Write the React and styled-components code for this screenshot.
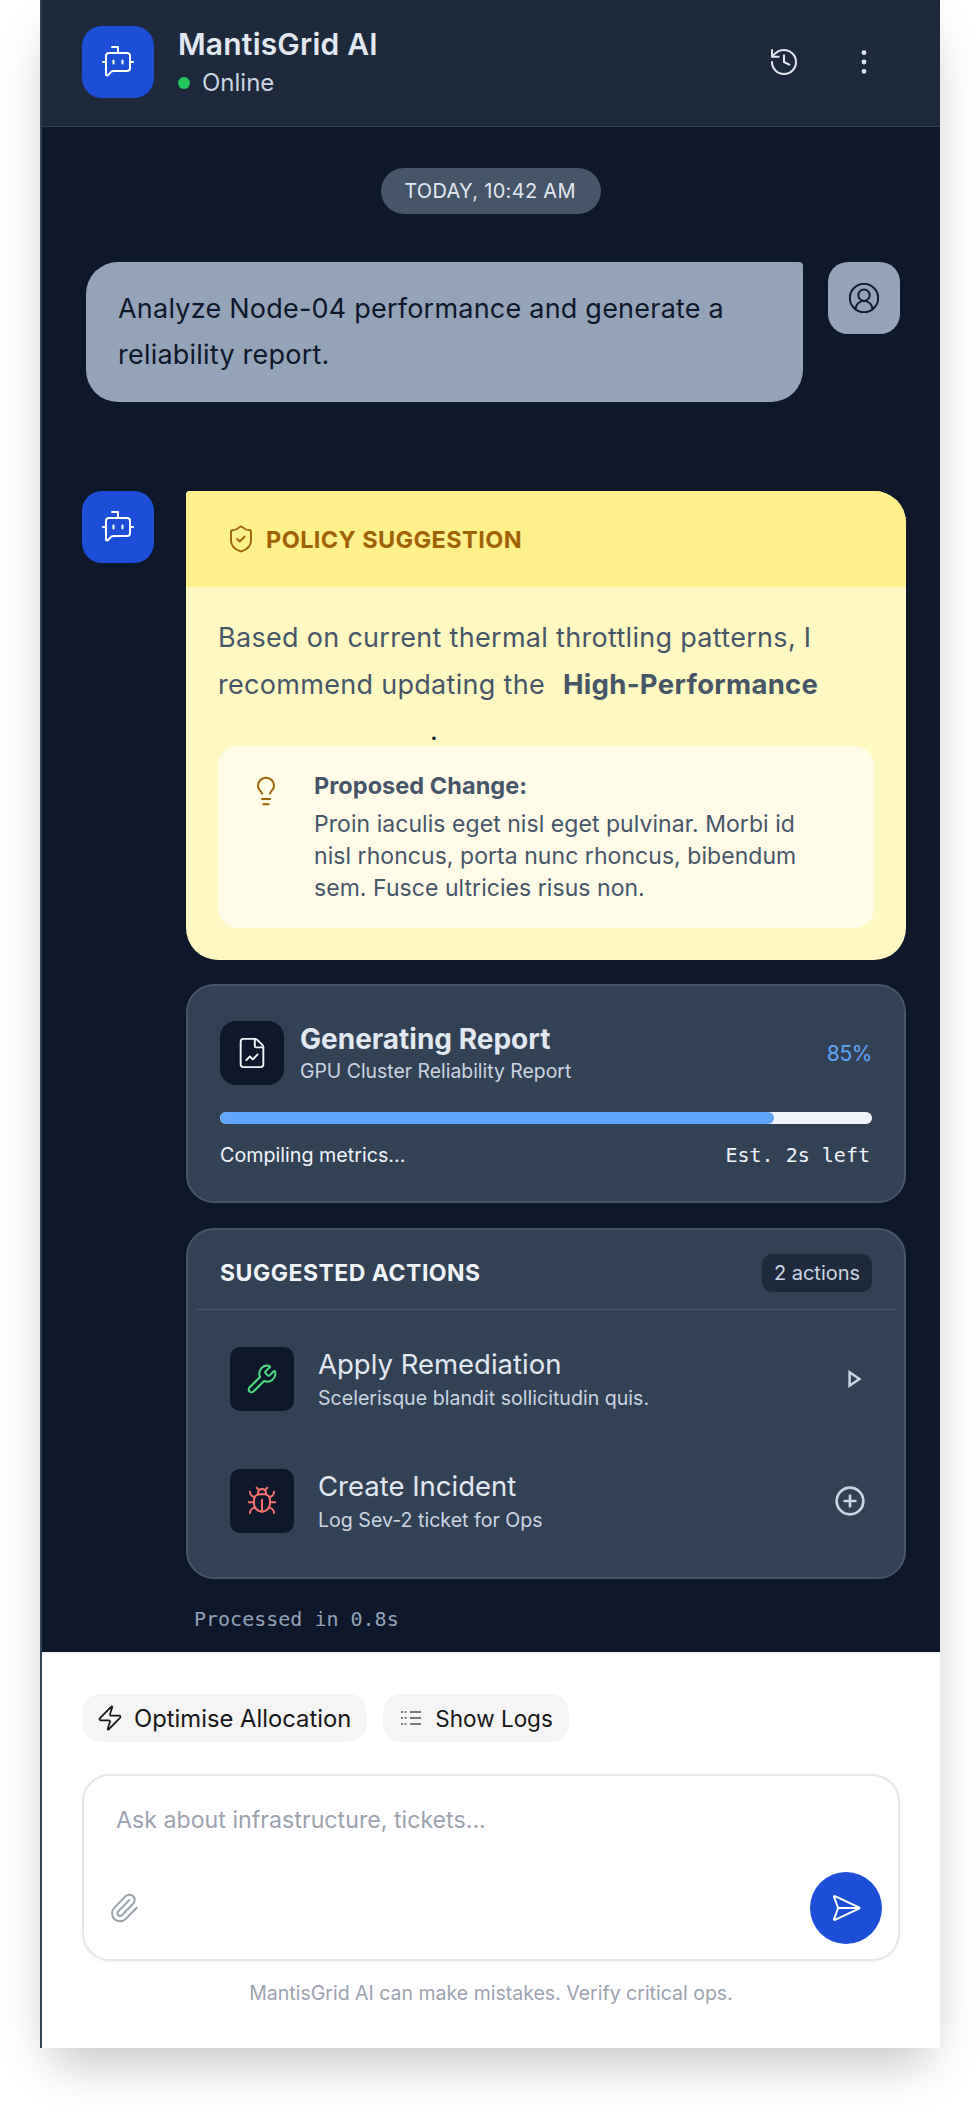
import React from "react";
import styled, { createGlobalStyle } from "styled-components";
import {
  BotMessageSquare, History, EllipsisVertical, CircleUserRound, ShieldCheck, Lightbulb,
  FileChartLine, Wrench, Bug, CirclePlus, Zap, Paperclip, SendHorizontal,
} from "lucide-react";

const Global = createGlobalStyle`
  html, body { margin: 0; padding: 0; background: #fff; }
  body { font-family: "Inter", "Noto Sans", sans-serif; height: 2128px; overflow: hidden; }
  * { box-sizing: border-box; }
`;

const Panel = styled.div`
  width: 900px; height: 2048px; margin-left: 40px; display: flex; flex-direction: column;
  border-left: 2px solid #334155; background: #0f172a;
  box-shadow: 0 25px 50px -12px rgba(0,0,0,.25);
`;
const Header = styled.header`
  height: 127px; display: flex; align-items: flex-start; justify-content: space-between;
  padding: 26px 40px 0 40px; background: #1e293b; border-bottom: 1px solid #334155;
`;
const Brand = styled.div`display: flex; gap: 24px;`;
const BotTile = styled.div`
  width: 72px; height: 72px; flex: none; border-radius: 20px; background: #1d4ed8; color: #fff;
  display: flex; align-items: center; justify-content: center;
`;
const BrandText = styled.div`display: flex; flex-direction: column;`;
const Title = styled.div`
  font-size: 30px; font-weight: 600; line-height: 36px; color: #e2e8f0; letter-spacing: .2px;
`;
const Status = styled.div`
  display: flex; align-items: center; gap: 12px; margin-top: 5px; font-size: 24px; line-height: 32px; color: #cbd5e1;
`;
const Dot = styled.span`width: 12px; height: 12px; border-radius: 50%; background: #22c55e;`;
const Tools = styled.div`display: flex; gap: 8px;`;
const ToolButton = styled.div`
  width: 72px; height: 72px; display: flex; align-items: center; justify-content: center; color: #e2e8f0;
`;

const Main = styled.main`flex: 1; display: flex; flex-direction: column; padding: 41px 40px 0 40px; min-height: 0;`;
const DatePill = styled.div`
  align-self: center; height: 46px; width: 220px; padding-right: 2px; border-radius: 23px; background: #475569; color: #e2e8f0;
  font-size: 20px; letter-spacing: .3px; display: flex; align-items: center; justify-content: center;
`;
const UserRow = styled.div`display: flex; justify-content: flex-end; gap: 25px; margin-top: 48px;`;
const UserBubble = styled.div`
  width: 717px; height: 140px; padding: 24px 32px; background: #94a3b8; color: #0f172a;
  border-radius: 32px 4px 32px 32px; font-size: 27px; letter-spacing: .22px; line-height: 46px;
`;
const UserTile = styled.div`
  width: 72px; height: 72px; border-radius: 20px; background: #94a3b8; color: #0f172a;
  display: flex; align-items: center; justify-content: center;
`;
const AiRow = styled.div`display: flex; gap: 32px; margin-top: 89px;`;
const AiColumn = styled.div`width: 720px; flex: none; display: flex; flex-direction: column;`;

const Policy = styled.section`
  height: 469px; border-radius: 4px 32px 32px 32px; overflow: hidden; background: #fef9c3;
`;
const PolicyHead = styled.div`
  height: 96px; padding: 0 40px; background: #fef08a; color: #a16207; display: flex; align-items: center; gap: 10px;
  font-size: 23.5px; font-weight: 700; letter-spacing: .4px;
`;
const PolicyBody = styled.div`padding: 28px 32px 0;`;
const PolicyText = styled.p`
  margin: 0; font-size: 27px; letter-spacing: .3px; line-height: 46px; color: #475569;
  strong { font-size: 27.5px; font-weight: 700; margin-left: 18px; }
`;
const Stop = styled.span`
  display: block; height: 38px; margin-left: 212px; color: #0f172a;
`;
const Proposal = styled.div`
  height: 182px; padding: 24px 32px 0 32px; border-radius: 20px; background: #fefce8; display: flex; gap: 20px;
`;
const BulbBox = styled.div`width: 44px; flex: none; color: #a16207; padding-top: 5px;`;
const ProposalText = styled.div`max-width: 500px; color: #475569; font-size: 23px; letter-spacing: .05px; line-height: 32px;`;
const ProposalTitle = styled.div`font-weight: 700; font-size: 23.5px; margin-bottom: 6px;`;

const Card = styled.section`
  background: #334155; border: 2px solid #475569; border-radius: 28px; color: #e2e8f0;
`;
const ProgressCard = styled(Card)`height: 219px; margin-top: 24px; padding: 35px 32px 0;`;
const ProgressHead = styled.div`display: flex; align-items: center; gap: 16px;`;
const DarkTile = styled.div`
  width: 64px; height: 64px; flex: none; background: #0f172a; border-radius: ${p => p.$radius}px; color: ${p => p.$color};
  display: flex; align-items: center; justify-content: center;
`;
const Grow = styled.div`flex: 1; min-width: 0;`;
const ProgressTitle = styled.div`font-size: 28px; font-weight: 700; line-height: 36px;`;
const ProgressSub = styled.div`font-size: 19.4px; line-height: 28px; color: #cbd5e1;`;
const Percent = styled.div`font-size: 21px; letter-spacing: -.4px; color: #60a5fa;`;
const Track = styled.div`height: 12px; margin-top: 27px; border-radius: 6px; background: #f1f5f9; overflow: hidden;`;
const Fill = styled.div`height: 100%; border-radius: 6px; background: #60a5fa;`;
const ProgressFoot = styled.div`
  display: flex; justify-content: space-between; margin-top: 17px; font-size: 19.7px; line-height: 28px; color: #f1f5f9;
`;
const Mono = styled.span`font-family: "DejaVu Sans Mono", "Liberation Mono", monospace; font-size: 20px; color: ${p => p.$color || "inherit"};`;
const EstLeft = styled(Mono)`margin-right: 2px;`;

const ActionsCard = styled(Card)`height: 351px; margin-top: 25px;`;
const ActionsHead = styled.div`
  margin: 0 8px; padding: 24px 24px 17px; display: flex; align-items: center; justify-content: space-between;
  border-bottom: 1px solid #475569;
`;
const ActionsTitle = styled.div`font-size: 23px; font-weight: 700; letter-spacing: .5px; color: #f1f5f9;`;
const Count = styled.div`
  height: 38px; width: 110px; border-radius: 10px; background: #1e293b; color: #cbd5e1; font-size: 20px;
  display: flex; align-items: center; justify-content: center;
`;
const ActionList = styled.div`padding: 13px 8px 20px; display: flex; flex-direction: column; gap: 10px;`;
const Action = styled.div`display: flex; align-items: center; gap: 24px; padding: 24px 30px 24px 34px;`;
const ActionTitle = styled.div`font-size: 27.5px; line-height: 34px;`;
const ActionSub = styled.div`font-size: 19.6px; line-height: 25px; color: #cbd5e1; margin-top: 5px;`;
const ActionIcon = styled.div`color: #cbd5e1; display: flex;`;
const Processed = styled.div`margin: 26px 0 auto 112px; line-height: 28px;`;

const Footer = styled.footer`
  height: 396px; flex: none; margin: 0 -40px; padding: 40px 40px 0; background: #fff; border-top: 2px solid #f1f5f9;
`;
const Chips = styled.div`display: flex; gap: 16px;`;
const Chip = styled.div`
  height: 48px; padding: 0 16px 0 14px; display: flex; align-items: center; gap: 10px; border-radius: 18px; background: #f5f5f5;
  color: #171717; font-size: ${p => p.$size}px;
`;
const Composer = styled.div`
  height: 187px; margin-top: 32px; padding: 0 16px 15px 24px; border: 2px solid #e5e7eb; border-radius: 28px; background: #fff;
  display: flex; flex-direction: column; justify-content: space-between; box-shadow: 0 1px 3px rgba(0,0,0,.06);
`;
const Placeholder = styled.div`padding: 28px 0 0 8px; font-size: 23.2px; line-height: 32px; color: #9ca3af;`;
const ComposerBar = styled.div`display: flex; align-items: center; justify-content: space-between;`;
const Clip = styled.div`color: #9ca3af; display: flex;`;
const Send = styled.div`
  width: 72px; height: 72px; border-radius: 50%; background: #1d4ed8; color: #fff;
  display: flex; align-items: center; justify-content: center;
`;
const Note = styled.div`margin-top: 18px; text-align: center; font-size: 19.5px; line-height: 28px; color: #9ca3af;`;

const PlayIcon = () => (
  <svg width="24" height="24" viewBox="0 0 24 24" fill="none" stroke="currentColor" strokeWidth="2.5" strokeLinejoin="miter">
    <polygon points="7.6,5.3 17.4,12 7.6,18.7" />
  </svg>
);
const DottedList = () => (
  <svg width="28" height="28" viewBox="0 0 28 28" fill="none" stroke="#525252" strokeWidth="1.6">
    <path d="M4 8h2M7.5 8h2M13 8h11M4 14h2M7.5 14h2M13 14h11M4 20h2M7.5 20h2M13 20h11" />
  </svg>
);

export default function App() {
  return (
    <>
      <Global />
      <Panel>
        <Header>
          <Brand>
            <BotTile><BotMessageSquare size={36} strokeWidth={1.35} /></BotTile>
            <BrandText>
              <Title>MantisGrid AI</Title>
              <Status><Dot />Online</Status>
            </BrandText>
          </Brand>
          <Tools>
            <ToolButton><History size={32} strokeWidth={1.5} /></ToolButton>
            <ToolButton><EllipsisVertical size={32} strokeWidth={1.6} /></ToolButton>
          </Tools>
        </Header>
        <Main>
          <DatePill>TODAY, 10:42 AM</DatePill>
          <UserRow>
            <UserBubble>Analyze Node-04 performance and generate a reliability report.</UserBubble>
            <UserTile><CircleUserRound size={34} strokeWidth={1.35} /></UserTile>
          </UserRow>
          <AiRow>
            <BotTile><BotMessageSquare size={36} strokeWidth={1.35} /></BotTile>
            <AiColumn>
              <Policy>
                <PolicyHead><ShieldCheck size={30} strokeWidth={1.5} />POLICY SUGGESTION</PolicyHead>
                <PolicyBody>
                  <PolicyText>
                    Based on current thermal throttling patterns, I recommend updating the<strong>High-Performance</strong>
                    <Stop>.</Stop>
                  </PolicyText>
                  <Proposal>
                    <BulbBox><Lightbulb size={32} strokeWidth={1.5} /></BulbBox>
                    <ProposalText>
                      <ProposalTitle>Proposed Change:</ProposalTitle>
                      Proin iaculis eget nisl eget pulvinar. Morbi id nisl rhoncus, porta nunc rhoncus, bibendum sem. Fusce ultricies risus non.
                    </ProposalText>
                  </Proposal>
                </PolicyBody>
              </Policy>
              <ProgressCard>
                <ProgressHead>
                  <DarkTile $radius={16} $color="#f1f5f9"><FileChartLine size={34} strokeWidth={1.35} /></DarkTile>
                  <Grow>
                    <ProgressTitle>Generating Report</ProgressTitle>
                    <ProgressSub>GPU Cluster Reliability Report</ProgressSub>
                  </Grow>
                  <Percent>85%</Percent>
                </ProgressHead>
                <Track><Fill style={{ width: "85%" }} /></Track>
                <ProgressFoot>
                  <span>Compiling metrics...</span>
                  <EstLeft>Est. 2s left</EstLeft>
                </ProgressFoot>
              </ProgressCard>
              <ActionsCard>
                <ActionsHead>
                  <ActionsTitle>SUGGESTED ACTIONS</ActionsTitle>
                  <Count>2 actions</Count>
                </ActionsHead>
                <ActionList>
                  <Action>
                    <DarkTile $radius={10} $color="#4ade80"><Wrench size={32} strokeWidth={1.5} /></DarkTile>
                    <Grow>
                      <ActionTitle>Apply Remediation</ActionTitle>
                      <ActionSub>Scelerisque blandit sollicitudin quis.</ActionSub>
                    </Grow>
                    <ActionIcon><PlayIcon /></ActionIcon>
                  </Action>
                  <Action>
                    <DarkTile $radius={10} $color="#f87171"><Bug size={32} strokeWidth={1.5} /></DarkTile>
                    <Grow>
                      <ActionTitle>Create Incident</ActionTitle>
                      <ActionSub>Log Sev-2 ticket for Ops</ActionSub>
                    </Grow>
                    <ActionIcon><CirclePlus size={32} strokeWidth={2} /></ActionIcon>
                  </Action>
                </ActionList>
              </ActionsCard>
            </AiColumn>
          </AiRow>
          <Processed><Mono $color="#94a3b8">Processed in 0.8s</Mono></Processed>
          <Footer>
            <Chips>
              <Chip $size={23.8}><Zap size={28} strokeWidth={1.5} />Optimise Allocation</Chip>
              <Chip $size={22.5}><DottedList />Show Logs</Chip>
            </Chips>
            <Composer>
              <Placeholder>Ask about infrastructure, tickets...</Placeholder>
              <ComposerBar>
                <Clip><Paperclip size={32} strokeWidth={1.5} /></Clip>
                <Send><SendHorizontal size={32} strokeWidth={1.5} /></Send>
              </ComposerBar>
            </Composer>
            <Note>MantisGrid AI can make mistakes. Verify critical ops.</Note>
          </Footer>
        </Main>
      </Panel>
    </>
  );
}
